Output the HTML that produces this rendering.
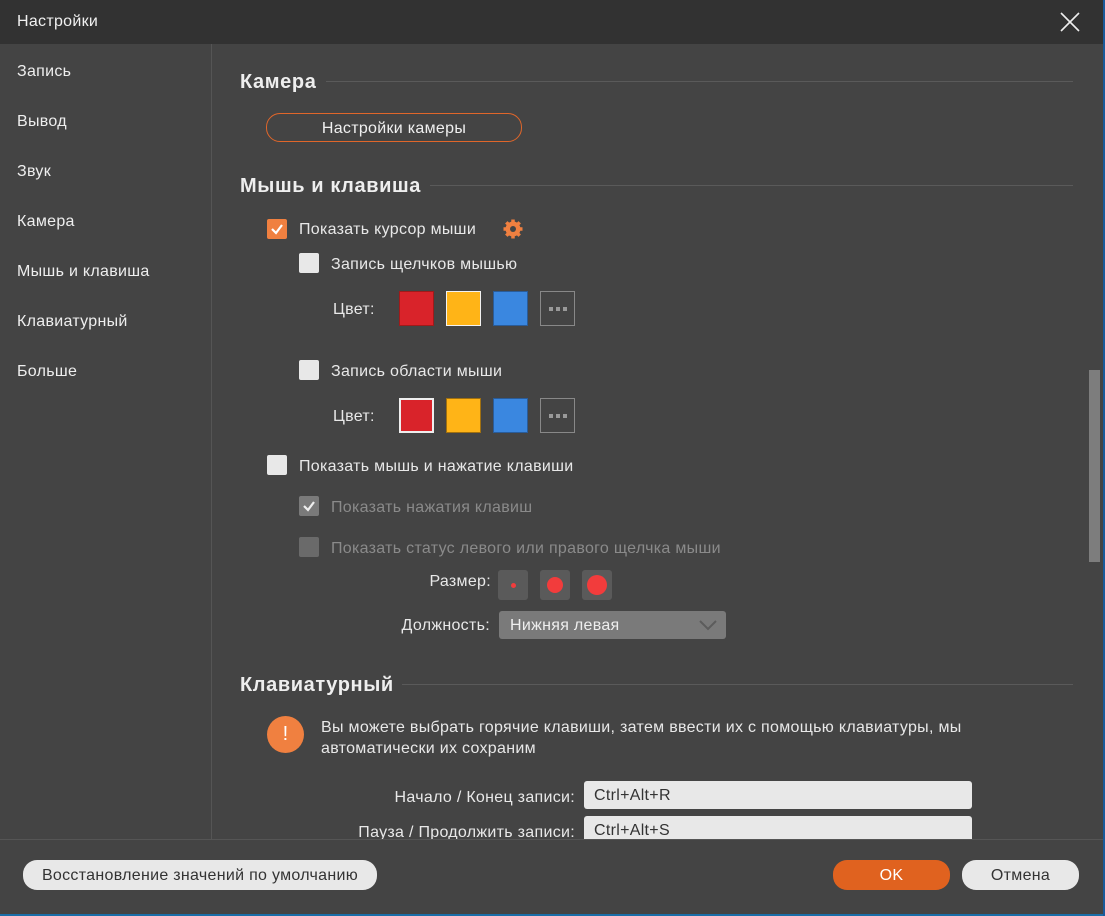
<!DOCTYPE html>
<html><head><meta charset="utf-8"><style>
*{margin:0;padding:0;box-sizing:border-box}
body{width:1105px;height:916px;background:#444;font-family:"Liberation Sans",sans-serif;color:#e8e8e8;position:relative;overflow:hidden;font-size:16px;letter-spacing:0.3px}
.a{position:absolute;white-space:nowrap}
.title{left:0;top:0;width:1105px;height:44px;background:#323232}
.side{left:211px;top:44px;width:1px;height:795px;background:#555}
.nav{left:17px;color:#eee}
.h{font-weight:bold;font-size:20px;color:#eee;letter-spacing:0.6px}
.line{height:1px;background:#5a5a5a}
.cb{width:20px;height:20px;border-radius:2px;background:#e8e8e8}
.sw{width:35px;height:35px}
.r{text-align:right}
.sz{width:30px;height:30px;border-radius:3px;background:#5a5a5a}
.dot{position:absolute;border-radius:50%;background:#f23c3c}
.inp{background:#e8e8e8;border-radius:3px;color:#333;padding-left:10px;line-height:28px;height:28px}
.btn{border-radius:14px;height:30px;line-height:30px;text-align:center}
.dots{border:1px solid #888}
.dots i{position:absolute;top:15px;width:4px;height:4px;background:#999}
</style></head><body>
<div class="a title"></div>
<div class="a" style="left:17px;top:13px;color:#f0f0f0">Настройки</div>
<svg class="a" style="left:1060px;top:12px" width="20" height="20"><path d="M1 1L19 19M19 1L1 19" stroke="#eee" stroke-width="1.6"/></svg>
<div class="a side"></div>
<div class="a nav" style="top:63px">Запись</div>
<div class="a nav" style="top:113px">Вывод</div>
<div class="a nav" style="top:163px">Звук</div>
<div class="a nav" style="top:213px">Камера</div>
<div class="a nav" style="top:263px">Мышь и клавиша</div>
<div class="a nav" style="top:313px">Клавиатурный</div>
<div class="a nav" style="top:363px">Больше</div>

<div class="a h" style="left:240px;top:71px">Камера</div>
<div class="a line" style="left:326px;top:81px;width:747px"></div>
<div class="a btn" style="left:266px;top:113px;width:256px;height:29px;line-height:29px;border:1px solid #e0662a;color:#f0f0f0">Настройки камеры</div>

<div class="a h" style="left:240px;top:175px">Мышь и клавиша</div>
<div class="a line" style="left:430px;top:185px;width:643px"></div>

<div class="a cb" style="left:267px;top:219px;background:#f08040"></div>
<svg class="a" style="left:267px;top:219px" width="20" height="20"><path d="M5 10L9 14L15 6" stroke="#fff" stroke-width="2.2" fill="none"/></svg>
<div class="a" style="left:299px;top:221px">Показать курсор мыши</div>
<svg class="a" style="left:502px;top:218px" width="22" height="22" viewBox="0 0 22 22"><g fill="#f08040"><circle cx="11" cy="11" r="7.5"/><g stroke="#f08040" stroke-width="3.5"><path d="M11 1.5V20.5M1.5 11H20.5M4.3 4.3L17.7 17.7M17.7 4.3L4.3 17.7"/></g></g><circle cx="11" cy="11" r="3" fill="#444"/></svg>

<div class="a cb" style="left:299px;top:253px"></div>
<div class="a" style="left:331px;top:256px">Запись щелчков мышью</div>
<div class="a" style="left:333px;top:301px">Цвет:</div>
<div class="a sw" style="left:399px;top:291px;background:#d9232a;border:1px solid #a01a1a"></div>
<div class="a sw" style="left:446px;top:291px;background:#ffb417;border:1px solid #f2f2f2"></div>
<div class="a sw" style="left:493px;top:291px;background:#3a87e0;border:1px solid #2a5c99"></div>
<div class="a sw dots" style="left:540px;top:291px"><i style="left:8px"></i><i style="left:15px"></i><i style="left:22px"></i></div>

<div class="a cb" style="left:299px;top:360px"></div>
<div class="a" style="left:331px;top:363px">Запись области мыши</div>
<div class="a" style="left:333px;top:408px">Цвет:</div>
<div class="a sw" style="left:399px;top:398px;background:#d9232a;border:2px solid #eee"></div>
<div class="a sw" style="left:446px;top:398px;background:#ffb417;border:1px solid #a07010"></div>
<div class="a sw" style="left:493px;top:398px;background:#3a87e0;border:1px solid #2a5c99"></div>
<div class="a sw dots" style="left:540px;top:398px"><i style="left:8px"></i><i style="left:15px"></i><i style="left:22px"></i></div>

<div class="a cb" style="left:267px;top:455px"></div>
<div class="a" style="left:299px;top:458px">Показать мышь и нажатие клавиши</div>
<div class="a cb" style="left:299px;top:496px;background:#7a7a7a"></div>
<svg class="a" style="left:299px;top:496px" width="20" height="20"><path d="M5 10L9 14L15 6" stroke="#eee" stroke-width="2.2" fill="none"/></svg>
<div class="a" style="left:331px;top:499px;color:#8a8a8a">Показать нажатия клавиш</div>
<div class="a cb" style="left:299px;top:537px;background:#6a6a6a"></div>
<div class="a" style="left:331px;top:540px;color:#8a8a8a">Показать статус левого или правого щелчка мыши</div>
<div class="a r" style="left:391px;width:100px;top:573px">Размер:</div>
<div class="a sz" style="left:498px;top:570px"><div class="dot" style="left:13px;top:13px;width:5px;height:5px"></div></div>
<div class="a sz" style="left:540px;top:570px"><div class="dot" style="left:7px;top:7px;width:16px;height:16px"></div></div>
<div class="a sz" style="left:582px;top:570px"><div class="dot" style="left:5px;top:5px;width:20px;height:20px"></div></div>
<div class="a r" style="left:340px;width:150px;top:617px">Должность:</div>
<div class="a" style="left:499px;top:611px;width:227px;height:28px;background:#7a7a7a;border-radius:3px;color:#eee;padding-left:11px;line-height:30px">Нижняя левая</div>
<svg class="a" style="left:699px;top:619px" width="18" height="12"><path d="M1 2L9 10L17 2" stroke="#5c5c5c" stroke-width="2" fill="none"/></svg>

<div class="a h" style="left:240px;top:674px">Клавиатурный</div>
<div class="a line" style="left:402px;top:684px;width:671px"></div>
<div class="a" style="left:267px;top:716px;width:37px;height:37px;border-radius:50%;background:#f08040;color:#fff;text-align:center;line-height:36px;font-size:20px">!</div>
<div class="a" style="left:321px;top:717px;line-height:21px;white-space:normal;width:720px">Вы можете выбрать горячие клавиши, затем ввести их с помощью клавиатуры, мы<br>автоматически их сохраним</div>
<div class="a r" style="left:300px;width:275px;top:789px">Начало / Конец записи:</div>
<div class="a inp" style="left:584px;top:781px;width:388px;line-height:30px">Ctrl+Alt+R</div>
<div class="a r" style="left:300px;width:275px;top:824px">Пауза / Продолжить записи:</div>
<div class="a inp" style="left:584px;top:816px;width:388px;line-height:30px">Ctrl+Alt+S</div>

<div class="a" style="left:1089px;top:370px;width:11px;height:192px;background:#7d7d7d"></div>

<div class="a" style="left:0;top:839px;width:1105px;height:77px;background:#444;border-top:1px solid #555"></div>
<div class="a btn" style="left:23px;top:860px;width:354px;background:#e8e8e8;color:#333;line-height:32px">Восстановление значений по умолчанию</div>
<div class="a btn" style="left:833px;top:860px;width:117px;background:#e0621f;color:#fff;line-height:32px">OK</div>
<div class="a btn" style="left:962px;top:860px;width:117px;background:#e8e8e8;color:#333;line-height:32px">Отмена</div>
<div class="a" style="left:0;top:914px;width:1105px;height:2px;background:#1a6ea8"></div>
<div class="a" style="left:1103px;top:0;width:2px;height:916px;background:#1a5a9a"></div>
</body></html>
